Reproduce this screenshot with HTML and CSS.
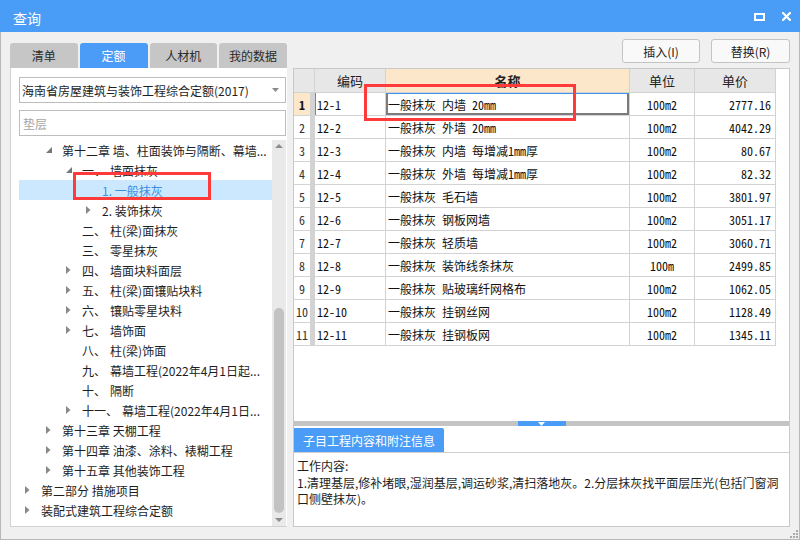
FILE: index.html
```html
<!DOCTYPE html>
<html lang="zh-CN">
<head>
<meta charset="utf-8">
<title>查询</title>
<link rel="stylesheet" href="styles.css">
</head>
<body>
<div class="window">
  <div class="titlebar">
    <span class="title">查询</span>
    <div class="win-btns">
      <svg class="ico-max" width="11" height="8" viewBox="0 0 11 8"><rect x="1" y="1" width="9" height="6" fill="none" stroke="#fff" stroke-width="2"/></svg>
      <svg class="ico-close" width="9" height="9" viewBox="0 0 9 9"><path d="M1 1 L8 8 M8 1 L1 8" stroke="#fff" stroke-width="2.2" stroke-linecap="square"/></svg>
    </div>
  </div>
  <div class="main">
    <div class="left-col">
      <div class="tabs">
        <div class="tab">清单</div>
        <div class="tab active">定额</div>
        <div class="tab">人材机</div>
        <div class="tab">我的数据</div>
      </div>
      <div class="left-panel">
        <div class="select">
          <span class="select-text">海南省房屋建筑与装饰工程综合定额(2017)</span>
          <svg class="select-arrow" width="7" height="4" viewBox="0 0 7 4"><path d="M0 0 H7 L3.5 4 Z" fill="#8a8a8a"/></svg>
        </div>
        <div class="search">垫层</div>
        <div class="tree-wrap">
          <ul class="tree">
            <li class="node l1"><span class="tw"><svg width="7" height="7" viewBox="0 0 7 7"><path d="M6 0 V6 H0 Z" fill="#777"/></svg></span><span class="lbl">第十二章 墙、柱面装饰与隔断、幕墙...</span></li>
            <li class="node l2"><span class="tw"><svg width="7" height="7" viewBox="0 0 7 7"><path d="M6 0 V6 H0 Z" fill="#777"/></svg></span><span class="lbl"><span class="no">一、</span>墙面抹灰</span></li>
            <li class="node l3 selected"><span class="tw"></span><span class="lbl">1. 一般抹灰</span></li>
            <li class="node l3"><span class="tw"><svg width="5" height="8" viewBox="0 0 5 8"><path d="M0 0 L4.5 4 L0 8 Z" fill="#888"/></svg></span><span class="lbl">2. 装饰抹灰</span></li>
            <li class="node l2"><span class="tw"></span><span class="lbl"><span class="no">二、</span>柱(梁)面抹灰</span></li>
            <li class="node l2"><span class="tw"></span><span class="lbl"><span class="no">三、</span>零星抹灰</span></li>
            <li class="node l2"><span class="tw"><svg width="5" height="8" viewBox="0 0 5 8"><path d="M0 0 L4.5 4 L0 8 Z" fill="#888"/></svg></span><span class="lbl"><span class="no">四、</span>墙面块料面层</span></li>
            <li class="node l2"><span class="tw"><svg width="5" height="8" viewBox="0 0 5 8"><path d="M0 0 L4.5 4 L0 8 Z" fill="#888"/></svg></span><span class="lbl"><span class="no">五、</span>柱(梁)面镶贴块料</span></li>
            <li class="node l2"><span class="tw"><svg width="5" height="8" viewBox="0 0 5 8"><path d="M0 0 L4.5 4 L0 8 Z" fill="#888"/></svg></span><span class="lbl"><span class="no">六、</span>镶贴零星块料</span></li>
            <li class="node l2"><span class="tw"><svg width="5" height="8" viewBox="0 0 5 8"><path d="M0 0 L4.5 4 L0 8 Z" fill="#888"/></svg></span><span class="lbl"><span class="no">七、</span>墙饰面</span></li>
            <li class="node l2"><span class="tw"></span><span class="lbl"><span class="no">八、</span>柱(梁)饰面</span></li>
            <li class="node l2"><span class="tw"></span><span class="lbl"><span class="no">九、</span>幕墙工程(2022年4月1日起...</span></li>
            <li class="node l2"><span class="tw"></span><span class="lbl"><span class="no">十、</span>隔断</span></li>
            <li class="node l2"><span class="tw"><svg width="5" height="8" viewBox="0 0 5 8"><path d="M0 0 L4.5 4 L0 8 Z" fill="#888"/></svg></span><span class="lbl"><span class="no">十一、</span>幕墙工程(2022年4月1日...</span></li>
            <li class="node l1"><span class="tw"><svg width="5" height="8" viewBox="0 0 5 8"><path d="M0 0 L4.5 4 L0 8 Z" fill="#888"/></svg></span><span class="lbl">第十三章 天棚工程</span></li>
            <li class="node l1"><span class="tw"><svg width="5" height="8" viewBox="0 0 5 8"><path d="M0 0 L4.5 4 L0 8 Z" fill="#888"/></svg></span><span class="lbl">第十四章 油漆、涂料、裱糊工程</span></li>
            <li class="node l1"><span class="tw"><svg width="5" height="8" viewBox="0 0 5 8"><path d="M0 0 L4.5 4 L0 8 Z" fill="#888"/></svg></span><span class="lbl">第十五章 其他装饰工程</span></li>
            <li class="node l0"><span class="tw"><svg width="5" height="8" viewBox="0 0 5 8"><path d="M0 0 L4.5 4 L0 8 Z" fill="#888"/></svg></span><span class="lbl">第二部分 措施项目</span></li>
            <li class="node l0"><span class="tw"><svg width="5" height="8" viewBox="0 0 5 8"><path d="M0 0 L4.5 4 L0 8 Z" fill="#888"/></svg></span><span class="lbl">装配式建筑工程综合定额</span></li>
          </ul>
          <div class="vscroll">
            <svg class="sb-arrow" width="14" height="12" viewBox="0 0 14 12"><path d="M3 8 L7 4 L11 8 Z" fill="#8c8c8c"/></svg>
            <div class="sb-track"><div class="sb-thumb"></div></div>
            <svg class="sb-arrow" width="14" height="12" viewBox="0 0 14 12"><path d="M3 4 L11 4 L7 8 Z" fill="#8c8c8c"/></svg>
          </div>
        </div>
      </div>
    </div>
    <div class="right-col">
      <div class="actions">
        <button class="btn btn-insert">插入(I)</button>
        <button class="btn btn-replace">替换(R)</button>
      </div>
      <div class="right-panel">
        <div class="grid-area">
          <div class="grid">
            <div class="hd hd-no"></div><div class="hd">编码</div><div class="hd hd-sel">名称</div><div class="hd">单位</div><div class="hd">单价</div>

            <div class="c no cur">1</div><div class="c code cur-code">12-1</div><div class="c name cur-name">一般抹灰 内墙 20mm</div><div class="c unit">100m2</div><div class="c price">2777.16</div>
            <div class="c no">2</div><div class="c code">12-2</div><div class="c name">一般抹灰 外墙 20mm</div><div class="c unit">100m2</div><div class="c price">4042.29</div>
            <div class="c no">3</div><div class="c code">12-3</div><div class="c name">一般抹灰 内墙 每增减1mm厚</div><div class="c unit">100m2</div><div class="c price">80.67</div>
            <div class="c no">4</div><div class="c code">12-4</div><div class="c name">一般抹灰 外墙 每增减1mm厚</div><div class="c unit">100m2</div><div class="c price">82.32</div>
            <div class="c no">5</div><div class="c code">12-5</div><div class="c name">一般抹灰 毛石墙</div><div class="c unit">100m2</div><div class="c price">3801.97</div>
            <div class="c no">6</div><div class="c code">12-6</div><div class="c name">一般抹灰 钢板网墙</div><div class="c unit">100m2</div><div class="c price">3051.17</div>
            <div class="c no">7</div><div class="c code">12-7</div><div class="c name">一般抹灰 轻质墙</div><div class="c unit">100m2</div><div class="c price">3060.71</div>
            <div class="c no">8</div><div class="c code">12-8</div><div class="c name">一般抹灰 装饰线条抹灰</div><div class="c unit">100m</div><div class="c price">2499.85</div>
            <div class="c no">9</div><div class="c code">12-9</div><div class="c name">一般抹灰 贴玻璃纤网格布</div><div class="c unit">100m2</div><div class="c price">1062.05</div>
            <div class="c no">10</div><div class="c code">12-10</div><div class="c name">一般抹灰 挂钢丝网</div><div class="c unit">100m2</div><div class="c price">1128.49</div>
            <div class="c no">11</div><div class="c code">12-11</div><div class="c name">一般抹灰 挂钢板网</div><div class="c unit">100m2</div><div class="c price">1345.11</div>
          </div>
        </div>
        <div class="splitter">
          <div class="split-handle"><svg width="7" height="4" viewBox="0 0 7 4"><path d="M0 0 H7 L3.5 4 Z" fill="#fff"/></svg></div>
        </div>
        <div class="info">
          <div class="info-tabs"><div class="info-tab">子目工程内容和附注信息</div></div>
          <div class="info-body">工作内容:<br>1.清理基层,修补堵眼,湿润基层,调运砂浆,清扫落地灰。2.分层抹灰找平面层压光(包括门窗洞口侧壁抹灰)。</div>
        </div>
      </div>
    </div>
  </div>
  <svg class="grip" width="9" height="9" viewBox="0 0 9 9">
    <rect x="7" y="1" width="2" height="2" fill="#a8a8a8"/>
    <rect x="4" y="4" width="2" height="2" fill="#a8a8a8"/><rect x="7" y="4" width="2" height="2" fill="#a8a8a8"/>
    <rect x="1" y="7" width="2" height="2" fill="#a8a8a8"/><rect x="4" y="7" width="2" height="2" fill="#a8a8a8"/><rect x="7" y="7" width="2" height="2" fill="#a8a8a8"/>
  </svg>
  <div class="mark mark-tree"></div>
  <div class="mark mark-grid"></div>
</div>
</body>
</html>
```

FILE: styles.css
```css
* { box-sizing: border-box; }
html, body { margin: 0; padding: 0; }
body {
  width: 800px;
  height: 540px;
  overflow: hidden;
  background: #f0f0f0;
  font-family: "Noto Sans CJK SC", "Microsoft YaHei", sans-serif;
  font-size: 12px;
  color: #1e1e1e;
}
.window {
  position: relative;
  width: 800px;
  height: 540px;
  display: flex;
  flex-direction: column;
  background: #f0f0f0;
}
.titlebar {
  height: 32px;
  flex: none;
  background: #4a9df6;
  display: flex;
  align-items: center;
  justify-content: space-between;
  padding: 4px 9px 0 13px;
}
.title { color: #fff; font-size: 14px; line-height: 20px; }
.win-btns { display: flex; align-items: center; gap: 17px; margin-top: -3px; }
.ico-max, .ico-close { display: block; }

.main {
  flex: 1;
  display: flex;
  gap: 6px;
  padding: 0 9px 12px 9px;
  border: 1px solid #b8b8b8;
  border-top: none;
  min-height: 0;
}
.left-col { width: 277px; flex: none; display: flex; flex-direction: column; }
.tabs { display: flex; gap: 2px; margin-top: 11px; height: 25px; flex: none; }
.tab {
  width: 78px;
  background: #c6c6c6;
  border-radius: 3px 3px 0 0;
  color: #2a2a2a;
  font-size: 12px;
  display: flex;
  align-items: center;
  justify-content: center;
}
.tab.active { background: #4a9cf6; color: #fff; }

.left-panel {
  flex: 1;
  min-height: 0;
  background: #fff;
  border-left: 1px solid #d2d2d2;
  border-bottom: 1px solid #d2d2d2;
  padding: 9px 1px 0 8px;
  display: flex;
  flex-direction: column;
}
.select {
  height: 26px;
  flex: none;
  border: 1px solid #bdbdbd;
  display: flex;
  align-items: center;
  justify-content: space-between;
  padding: 0 6px 0 2px;
  font-size: 12px;
  color: #1e1e1e;
}
.select-arrow { display: block; }
.search {
  height: 26px;
  flex: none;
  margin-top: 7px;
  border: 1px solid #bdbdbd;
  padding-left: 3px;
  color: #a6a6a6;
  display: flex;
  align-items: center;
}
.tree-wrap {
  flex: 1;
  min-height: 0;
  margin-top: 4px;
  display: flex;
}
.tree {
  list-style: none;
  margin: 0;
  padding: 0;
  flex: 1;
  min-width: 0;
  overflow: hidden;
}
.node {
  height: 20px;
  display: flex;
  align-items: center;
  white-space: nowrap;
}
.node.l0 { padding-left: 6px; }
.node.l1 { padding-left: 27px; }
.node.l2 { padding-left: 47px; }
.node.l3 { padding-left: 67px; }
.tw { width: 16px; flex: none; display: flex; align-items: center; }
.tw svg { display: block; }
.lbl { min-width: 0; }
.no { margin-right: 4px; }
.node.selected { background: #cce8ff; }
.node.selected .lbl { color: #3b8fe3; }

.vscroll {
  width: 14px;
  flex: none;
  background: #e9e9e9;
  display: flex;
  flex-direction: column;
}
.sb-arrow { display: block; flex: none; }
.sb-track { flex: 1; display: flex; flex-direction: column; justify-content: flex-end; padding: 0 2px 1px 2px; }
.sb-thumb { height: 205px; background: #c2c2c2; border-radius: 5px; }

.right-col { flex: 1; min-width: 0; display: flex; flex-direction: column; }
.actions {
  display: flex;
  justify-content: flex-end;
  gap: 11px;
  margin-top: 7px;
  margin-bottom: 5px;
  height: 24px;
  flex: none;
}
.btn {
  height: 24px;
  border: 1px solid #c4c4c4;
  border-radius: 3px;
  background: #f9f9f9;
  font-family: inherit;
  font-size: 12px;
  color: #222;
  padding: 0;
}
.btn-insert { width: 78px; }
.btn-replace { width: 79px; }

.right-panel {
  flex: 1;
  min-height: 0;
  background: #fff;
  border: 1px solid #c9c9c9;
  display: flex;
  flex-direction: column;
}
.grid-area { flex: 1; min-height: 0; }
.grid {
  display: grid;
  width: 482px;
  grid-template-columns: 20px 70px 243px 64px 80px;
  grid-template-rows: 23px;
  grid-auto-rows: 22px;
  gap: 1px;
  padding: 0 1px 1px 0;
  background: #d3d3d3;
}
.hd {
  background: #e7e7e7;
  font-size: 13px;
  color: #222;
  display: flex;
  align-items: center;
  justify-content: center;
}
.hd-sel { background: #fde7ca; font-weight: bold; }
.c {
  background: #fff;
  font-family: "Noto Sans Mono CJK SC", "Noto Sans CJK SC", monospace;
  font-size: 12px;
  color: #111;
  display: flex;
  align-items: center;
  white-space: pre;
  overflow: hidden;
}
.c.no { justify-content: center; color: #333; }
.c.no.cur { background: #fde7ca; font-weight: bold; color: #111; }
.c.code { padding-left: 2px; }
.c.name { padding-left: 2px; }
.c.unit { justify-content: center; }
.c.price { justify-content: flex-end; padding-right: 4px; }
.cur-code { box-shadow: inset 1px 0 0 #3f92f0; }
.cur-name {
  box-shadow: inset 0 1px 0 #3f92f0, inset 2px 0 0 #7c7c7c, inset -2px 0 0 #7c7c7c, inset 0 -2px 0 #7c7c7c;
}

.splitter {
  height: 5px;
  flex: none;
  background: #c4c4c4;
  display: flex;
  justify-content: center;
}
.split-handle {
  width: 48px;
  background: #4a9cf6;
  display: flex;
  justify-content: center;
  align-items: center;
}
.split-handle svg { display: block; }
.info { flex: none; padding-top: 2px; }
.info-tabs { height: 24px; display: flex; }
.info-tab {
  width: 150px;
  background: #4a9cf6;
  color: #fff;
  font-size: 12px;
  border-radius: 0 2px 0 0;
  display: flex;
  align-items: center;
  padding-left: 9px;
}
.info-body {
  height: 74px;
  border-top: 1px solid #cfcfcf;
  padding: 5px 8px 0 3px;
  line-height: 16.5px;
  font-size: 12px;
  color: #1e1e1e;
}

.grip { position: absolute; right: 2px; bottom: 2px; display: block; }
.mark {
  position: absolute;
  border: 3px solid #ff3a3a;
}
.mark-tree { left: 73px; top: 172px; width: 138px; height: 28px; }
.mark-grid { left: 364px; top: 84px; width: 212px; height: 37px; }
```
